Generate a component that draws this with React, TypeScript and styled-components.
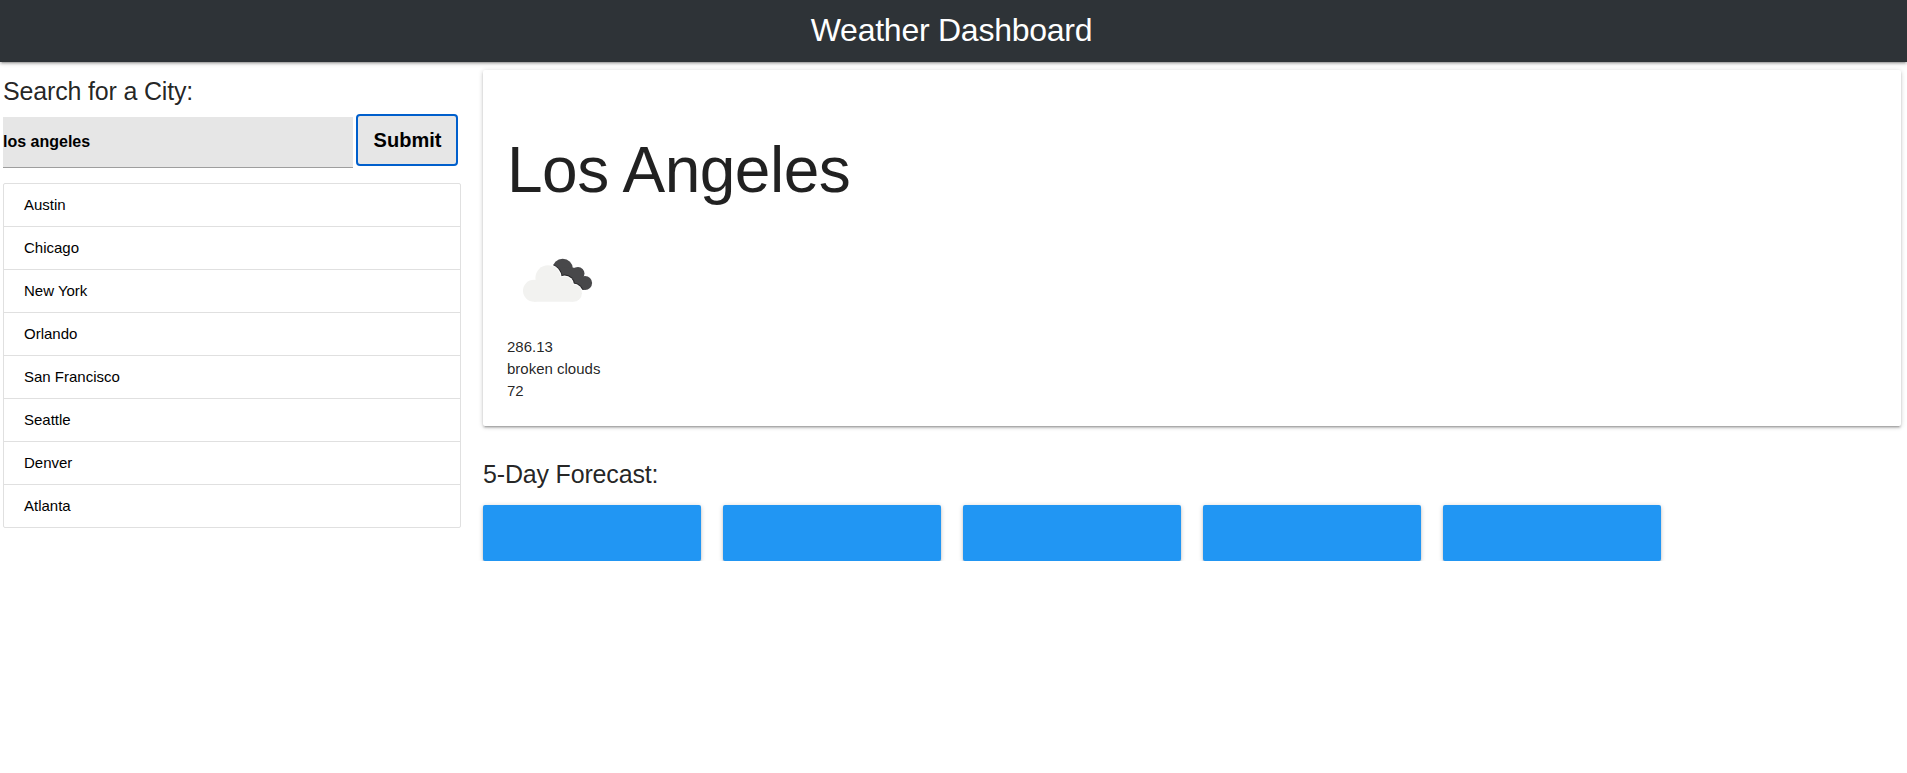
import React from "react";
import styled, { createGlobalStyle } from "styled-components";

const GlobalStyle = createGlobalStyle`
  *, *::before, *::after { box-sizing: border-box; }
  body {
    margin: 0;
    background: #fff;
    color: rgba(0, 0, 0, 0.87);
    font-family: "Liberation Sans", Arial, sans-serif;
    font-size: 15px;
    line-height: 22px;
  }
  h1, h2, h3, p, ul { margin: 0; padding: 0; font-weight: 400; }
`;

const raised =
  "0 2px 2px 0 rgba(0,0,0,0.14), 0 3px 1px -2px rgba(0,0,0,0.12), 0 1px 5px 0 rgba(0,0,0,0.2)";

const Header = styled.header`
  display: flex;
  justify-content: center;
  height: 62px;
  padding-top: 12px;
  background: #2e3337;
  color: #fff;
  box-shadow: ${raised};
`;

const Title = styled.h1`
  font-size: 32px;
  line-height: 36px;
  letter-spacing: -0.25px;
  padding-right: 4px;
`;

const Layout = styled.main`
  display: flex;
  gap: 22px;
  padding: 8px 6px 0 3px;
`;

const Sidebar = styled.aside`
  width: 458px;
`;

const SearchForm = styled.form`
  display: flex;
  align-items: flex-start;
  gap: 3px;
`;

const Heading = styled.h2<{ $top: number; $bottom: number }>`
  margin: ${(p) => p.$top}px 0 ${(p) => p.$bottom}px;
  font-size: 25px;
  line-height: 28px;
  letter-spacing: -0.17px;
`;

const SearchInput = styled.input`
  width: 350px;
  height: 51px;
  margin-top: 3px;
  padding: 0;
  border: 0;
  border-bottom: 1px solid #9e9e9e;
  border-radius: 0;
  outline: none;
  background: #e6e6e6;
  color: #000;
  font: bold 16px "Liberation Sans", Arial, sans-serif;
`;

const SubmitButton = styled.button`
  width: 102px;
  height: 52px;
  padding: 0 0 0 1px;
  border: 2px solid #005fcc;
  border-radius: 4px;
  background: #e6e6e6;
  color: #000;
  font: bold 20px "Liberation Sans", Arial, sans-serif;
`;

const CityList = styled.ul`
  margin-top: 15px;
  border: 1px solid #e0e0e0;
  border-radius: 2px;
  list-style: none;
`;

const CityItem = styled.li`
  height: 43px;
  padding: 10px 20px;
  color: #000;
  border-bottom: 1px solid #e0e0e0;
  &:last-child { height: 42px; border-bottom: 0; }
`;

const Content = styled.section`
  flex: 1;
`;

const CurrentCard = styled.article`
  height: 356px;
  padding: 65px 24px 24px;
  border-radius: 2px;
  background: #fff;
  box-shadow: ${raised};
`;

const CityName = styled.h3`
  font-size: 64px;
  line-height: 70px;
  letter-spacing: -0.5px;
`;

const WeatherIcon = styled.svg`
  display: block;
  width: 100px;
  height: 100px;
  margin: 26px 0 5px;
`;

const Days = styled.div`
  display: flex;
  gap: 22px;
`;

const DayCard = styled.div`
  width: 218px;
  height: 56px;
  border-radius: 2px;
  background: #2196f3;
  box-shadow: ${raised};
`;

const cities = ["Austin", "Chicago", "New York", "Orlando", "San Francisco", "Seattle", "Denver", "Atlanta"];
const days = [1, 2, 3, 4, 5];

const RearCloud = () => (
  <>
    <circle cx="55.7" cy="38" r="10.3" />
    <circle cx="71" cy="42.5" r="6.5" />
    <circle cx="78" cy="52" r="7.1" />
    <path d="M55 36L71 37L79 51L77 59L62 56L48 45Z" />
  </>
);

const FrontCloudTops = ({ grow = 0 }: { grow?: number }) => (
  <>
    <circle cx="41" cy="46.9" r={12.6 + grow} />
    <circle cx="57.5" cy="54" r={8.6 + grow} />
    <circle cx="66.3" cy="62.2" r={8.6 + grow} />
  </>
);

const BrokenClouds = () => (
  <WeatherIcon viewBox="0 0 100 100" aria-label="broken clouds">
    <clipPath id="rear-cloud">
      <RearCloud />
    </clipPath>
    <g fill="#48484a">
      <RearCloud />
    </g>
    <g fill="#242426" clipPath="url(#rear-cloud)">
      <FrontCloudTops grow={1.9} />
    </g>
    <g fill="#fff">
      <FrontCloudTops grow={1} />
    </g>
    <g fill="#f2f2f0">
      <circle cx="27" cy="59.8" r="11" />
      <FrontCloudTops />
      <path d="M27 49H53L66 55V70.8H27Z" />
    </g>
  </WeatherIcon>
);

export default function App() {
  return (
    <>
      <GlobalStyle />
      <Header>
        <Title>Weather Dashboard</Title>
      </Header>
      <Layout>
        <Sidebar>
          <Heading $top={7} $bottom={9}>Search for a City:</Heading>
          <SearchForm onSubmit={(e) => e.preventDefault()}>
            <SearchInput defaultValue="los angeles" />
            <SubmitButton type="submit">Submit</SubmitButton>
          </SearchForm>
          <CityList>
            {cities.map((city) => (
              <CityItem key={city}>{city}</CityItem>
            ))}
          </CityList>
        </Sidebar>
        <Content>
          <CurrentCard>
            <CityName>Los Angeles</CityName>
            <BrokenClouds />
            <p>286.13</p>
            <p>broken clouds</p>
            <p>72</p>
          </CurrentCard>
          <Heading $top={34} $bottom={17}>5-Day Forecast:</Heading>
          <Days>
            {days.map((day) => (
              <DayCard key={day} />
            ))}
          </Days>
        </Content>
      </Layout>
    </>
  );
}
